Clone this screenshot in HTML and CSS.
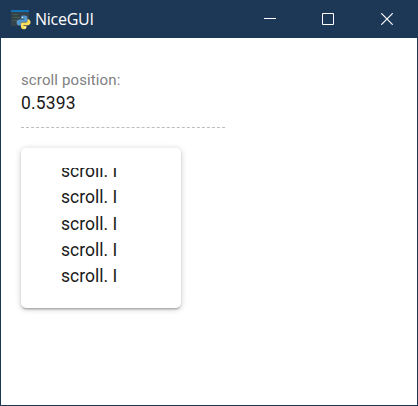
FILE: index.html
```html
<!DOCTYPE html>
<html lang="en">
<head>
<meta charset="utf-8">
<title>NiceGUI</title>
<link rel="stylesheet" href="styles.css">
</head>
<body>
<div class="window">
  <header class="titlebar">
    <svg class="app-icon" width="20" height="20" viewBox="0 0 20 20">
      <path d="M0 0h18v16H0z" fill="#37434c"/>
      <path d="M0 0h18v2H0z" fill="#1272b8"/>
      <path d="M2 4.500h5M2 7.500h7M2 10.500h4" stroke="#40604b"/>
      <path d="M12.500 5.500C9.700 5.500 10 7 10 8.800h3v.8H8.700C6.500 9.600 5.600 10.800 5.600 12.600s.8 3 3.100 3H10v-1.800c0-1 .8-1.800 1.800-1.800H15c1 0 1.500-.6 1.500-1.600V7.500c0-1.500-1.500-2-4-2z" fill="#5596cb"/>
      <path d="M12.800 19.200c2.700 0 2.700-1.400 2.700-3.200h-3v-.8h4.200c1.900 0 2.800-1.200 2.800-2.900S18.600 9.200 17 9.200h-.5v1.500c0 1.100-.7 1.900-1.700 1.900h-3.300c-1 0-1.500.6-1.500 1.600V17c0 1.400 1.100 2.200 2.800 2.200z" fill="#ffdf60"/>
      <circle cx="11.500" cy="7.500" r=".6" fill="#fff"/>
      <circle cx="14" cy="17.400" r=".6" fill="#fff"/>
    </svg>
    <span class="title">NiceGUI</span>
    <nav class="controls">
      <svg width="12" height="12" viewBox="0 0 12 12"><path d="M0 5.500h12"/></svg>
      <svg width="12" height="12" viewBox="0 0 12 12"><path d="M.5.5h11v11H.5z"/></svg>
      <svg class="close" width="12" height="12" viewBox="0 0 12 12"><path d="M.3.300l11.400 11.400M11.700.300L.3 11.700"/></svg>
    </nav>
  </header>
  <main class="content">
    <div class="label">scroll position:</div>
    <div class="value">0.5393</div>
    <svg class="separator" width="204" height="1" viewBox="0 0 204 1"><path d="M0 .5h204"/></svg>
    <section class="card">
      <div class="scroll-area">
        <div class="lines">
          <div>scroll. I</div>
          <div>scroll. I</div>
          <div>scroll. I</div>
          <div>scroll. I</div>
          <div>scroll. I</div>
        </div>
      </div>
    </section>
  </main>
</div>
</body>
</html>
```

FILE: styles.css
```css
* { box-sizing: border-box; }
body { margin: 0; font-family: Roboto, "Liberation Sans", sans-serif; overflow: hidden; }
.window {
  width: 418px;
  height: 406px;
  display: flex;
  flex-direction: column;
  border: 1px solid #1d3857;
  border-top: 0;
  background: #fff;
}
.titlebar {
  flex: none;
  height: 38px;
  display: flex;
  align-items: center;
  padding-left: 10px;
  background: #1d3857;
  color: #fff;
}
.app-icon { flex: none; margin-top: 2px; }
.title {
  margin: 0 0 0 4px;
  font: 16px/22px "Open Sans", "Noto Sans", sans-serif;
  letter-spacing: -.25px;
}
.controls {
  display: flex;
  gap: 46px;
  margin-left: auto;
  padding-right: 24px;
}
.controls svg { fill: none; stroke: #fff; stroke-width: 1; }
.controls .close { margin-left: 1px; stroke-width: 1.2; }
.content { padding: 31px 20px; color: #1a1a1a; }
.label { font-size: 15px; line-height: 22px; letter-spacing: .12px; color: #808080; }
.value { font-size: 17.5px; line-height: 24px; letter-spacing: .15px; }
.separator {
  display: block;
  margin-top: 12px;
  stroke: #bdbdbd;
  stroke-dasharray: 3 2.025;
}
.card {
  width: 160px;
  height: 160px;
  margin-top: 20px;
  padding: 20px;
  border-radius: 5px;
  background: #fff;
  box-shadow: 0 1px 6px rgba(0,0,0,.2), 0 2px 2px rgba(0,0,0,.14), 0 3px 1px -2px rgba(0,0,0,.12);
}
.scroll-area { height: 120px; overflow: hidden; }
.lines {
  margin-top: -10px;
  padding-left: 20px;
  font-size: 17.5px;
  line-height: 26.25px;
}
```
